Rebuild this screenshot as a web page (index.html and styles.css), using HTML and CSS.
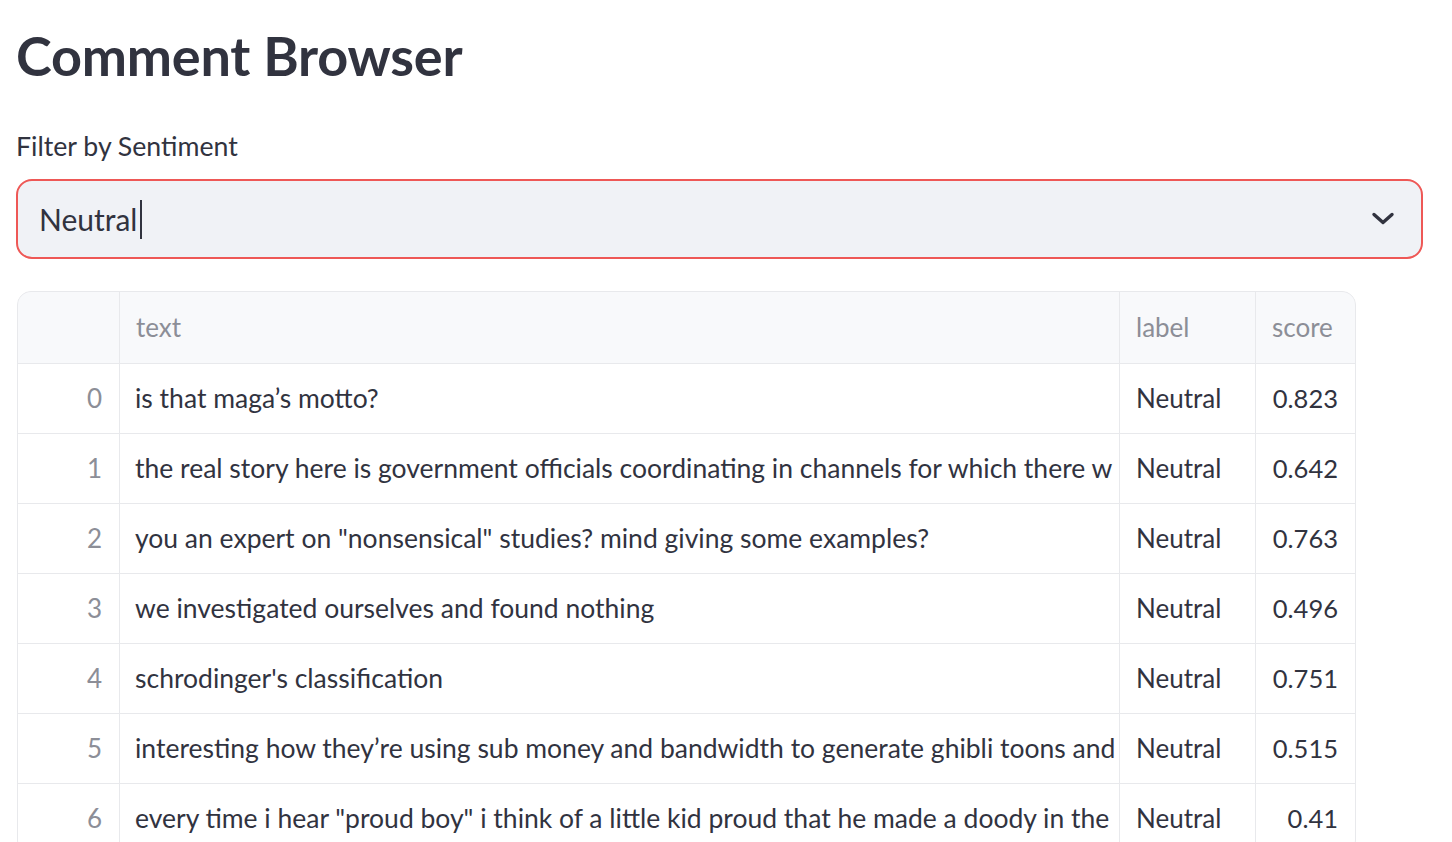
FILE: index.html
```html
<!DOCTYPE html>
<html lang="en">
<head>
<meta charset="utf-8">
<title>Comment Browser</title>
<link rel="stylesheet" href="styles.css">
</head>
<body>
<main class="app">
  <h1 class="title">Comment Browser</h1>
  <label class="field-label">Filter by Sentiment</label>
  <div class="select">
    <div class="select-value"><span>Neutral</span><span class="caret"></span></div>
    <svg class="chevron" width="24" height="24" viewBox="0 0 24 24"><path d="M3 7.5l9 8 9-8" fill="none" stroke="#31333f" stroke-width="3.4" stroke-linecap="round" stroke-linejoin="round"/></svg>
  </div>
  <div class="grid">
    <div class="cell head"></div>
    <div class="cell head">text</div>
    <div class="cell head">label</div>
    <div class="cell head">score</div>

    <div class="cell idx">0</div>
    <div class="cell txt">is that maga’s motto?</div>
    <div class="cell lbl">Neutral</div>
    <div class="cell num">0.823</div>

    <div class="cell idx">1</div>
    <div class="cell txt">the real story here is government officials coordinating in channels for which there w</div>
    <div class="cell lbl">Neutral</div>
    <div class="cell num">0.642</div>

    <div class="cell idx">2</div>
    <div class="cell txt">you an expert on "nonsensical" studies? mind giving some examples?</div>
    <div class="cell lbl">Neutral</div>
    <div class="cell num">0.763</div>

    <div class="cell idx">3</div>
    <div class="cell txt">we investigated ourselves and found nothing</div>
    <div class="cell lbl">Neutral</div>
    <div class="cell num">0.496</div>

    <div class="cell idx">4</div>
    <div class="cell txt">schrodinger's classification</div>
    <div class="cell lbl">Neutral</div>
    <div class="cell num">0.751</div>

    <div class="cell idx">5</div>
    <div class="cell txt">interesting how they’re using sub money and bandwidth to generate ghibli toons and</div>
    <div class="cell lbl">Neutral</div>
    <div class="cell num">0.515</div>

    <div class="cell idx">6</div>
    <div class="cell txt">every time i hear "proud boy" i think of a little kid proud that he made a doody in the</div>
    <div class="cell lbl">Neutral</div>
    <div class="cell num">0.41</div>
  </div>
</main>
</body>
</html>
```

FILE: styles.css
```css
html, body {
  margin: 0;
  padding: 0;
  background: #ffffff;
}

body {
  font-family: "Lato", "Liberation Sans", sans-serif;
  color: #31333f;
  overflow: hidden;
}

.app {
  display: flex;
  flex-direction: column;
  align-items: flex-start;
  padding: 24px 29px 0 16px;
}

.title {
  margin: 0;
  font-size: 54px;
  font-weight: 700;
  line-height: 64px;
  color: #31333f;
  letter-spacing: -0.2px;
}

.field-label {
  margin-top: 40px;
  font-size: 26.7px;
  line-height: 36px;
  color: #31333f;
}

.select {
  margin-top: 15px;
  box-sizing: border-box;
  width: 1407px;
  height: 80px;
  border: 2px solid #ee5856;
  border-radius: 16px;
  background: #f0f2f6;
  display: flex;
  align-items: center;
  justify-content: space-between;
  padding: 0 19px 0 21px;
}

.select-value {
  display: flex;
  align-items: center;
  font-size: 30px;
  color: #31333f;
}

.caret {
  display: inline-block;
  width: 2px;
  height: 39px;
  margin-left: 3px;
  background: #31333f;
}

.chevron {
  display: block;
  margin-right: 7px;
}

.grid {
  margin-top: 32px;
  margin-left: 1px;
  display: grid;
  grid-template-columns: 101px 999px 135px 99px;
  grid-auto-rows: 69px;
  grid-template-rows: 71px;
  gap: 1px;
  background: #e8e9ec;
  border: 1px solid #e8e9ec;
  border-radius: 14px;
  overflow: hidden;
}

.cell {
  background: #ffffff;
  display: flex;
  align-items: center;
  font-size: 26px;
  white-space: nowrap;
  overflow: hidden;
  color: #31333f;
  padding: 0 16px;
  min-width: 0;
  padding-bottom: 2px;
}

.head {
  background: #f8f9fb;
  color: #8c8e97;
}

.idx {
  justify-content: flex-end;
  color: #8c8e97;
  padding-right: 17px;
}

.txt {
  font-size: 26.5px;
  text-overflow: clip;
  padding-left: 15px;
  padding-right: 0;
}

.lbl {
  padding-left: 16px;
}

.num {
  justify-content: flex-end;
  padding-right: 17px;
  font-size: 25.5px;
}
```
